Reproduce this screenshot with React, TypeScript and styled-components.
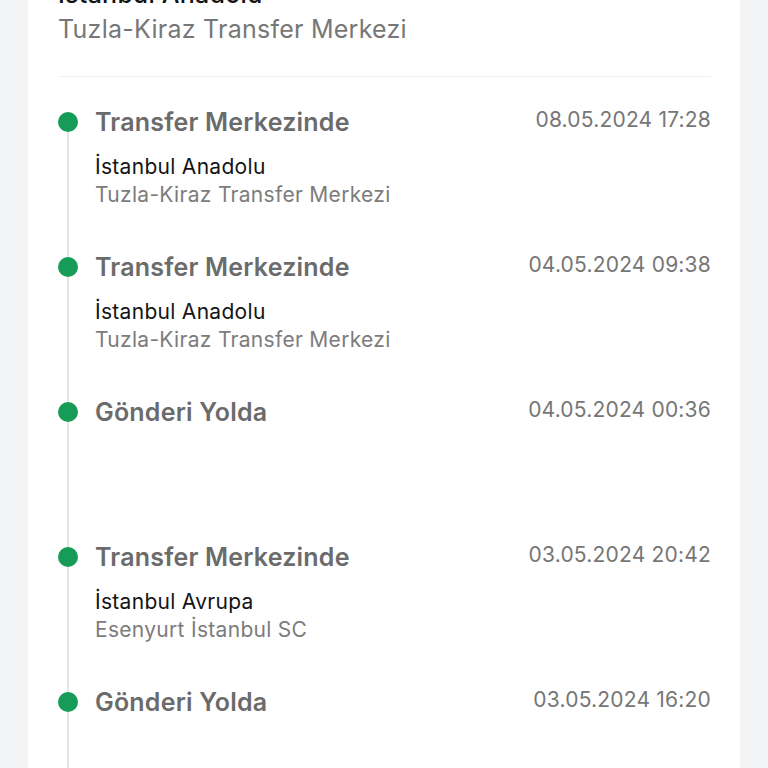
import React from "react";
import styled, { createGlobalStyle } from "styled-components";

const Global = createGlobalStyle`
  html, body { margin: 0; padding: 0; background: #f3f4f6; }
  body { font-family: Inter, "Noto Sans", "Liberation Sans", sans-serif; overflow: hidden; }
`;

const Page = styled.div`
  padding: 0 28px;
  height: 768px;
  overflow: hidden;
`;

const Card = styled.div`
  background: #ffffff;
  margin-top: -21px;
  padding: 0 29px 40px 30px;
  min-height: 900px;
`;

const HeaderTitle = styled.div`
  font-size: 25px;
  line-height: 30px;
  font-weight: 500;
  letter-spacing: 0.25px;
  color: #111;
`;

const HeaderSub = styled.div`
  font-size: 25px;
  line-height: 30px;
  letter-spacing: 0.25px;
  color: #777777;
  margin-top: 5px;
`;

const Divider = styled.div`
  height: 1px;
  background: #f1f1f1;
  margin: 32px 0 30px 1px;
`;

const Timeline = styled.div`
  position: relative;
  display: flex;
  flex-direction: column;
  &::before {
    content: "";
    position: absolute;
    left: 9px;
    top: 15px;
    bottom: 0;
    width: 2px;
    background: #e4e4e4;
  }
`;

const Item = styled.div`
  display: grid;
  grid-template-columns: 20px 1fr;
  column-gap: 17px;
  padding-bottom: 43px;
  position: relative;
`;

const Dot = styled.span`
  width: 20px;
  height: 20px;
  border-radius: 50%;
  background: #179c57;
  margin-top: 5px;
  position: relative;
  z-index: 1;
`;

const Body = styled.div`
  display: flex;
  flex-direction: column;
`;

const Head = styled.div`
  display: flex;
  justify-content: space-between;
  align-items: flex-start;
`;

const Status = styled.div`
  font-size: 25px;
  line-height: 30px;
  font-weight: 600;
  letter-spacing: 0.2px;
  color: #6b6b6b;
`;

const Time = styled.div`
  font-size: 21px;
  line-height: 26px;
  letter-spacing: 0.2px;
  color: #767676;
`;

const Lines = styled.div`
  margin-top: 16px;
  min-height: 56px;
`;

const Place = styled.div`
  font-size: 21px;
  line-height: 28px;
  letter-spacing: 0.3px;
  color: #141414;
`;

const Branch = styled.div`
  font-size: 21px;
  line-height: 28px;
  letter-spacing: 0.3px;
  color: #7c7c7c;
`;

type Ev = { status: string; time: string; place?: string; branch?: string };

const events: Ev[] = [
  { status: "Transfer Merkezinde", time: "08.05.2024 17:28", place: "İstanbul Anadolu", branch: "Tuzla-Kiraz Transfer Merkezi" },
  { status: "Transfer Merkezinde", time: "04.05.2024 09:38", place: "İstanbul Anadolu", branch: "Tuzla-Kiraz Transfer Merkezi" },
  { status: "Gönderi Yolda", time: "04.05.2024 00:36" },
  { status: "Transfer Merkezinde", time: "03.05.2024 20:42", place: "İstanbul Avrupa", branch: "Esenyurt İstanbul SC" },
  { status: "Gönderi Yolda", time: "03.05.2024 16:20" },
];

export default function App() {
  return (
    <>
      <Global />
      <Page>
        <Card>
          <HeaderTitle>İstanbul Anadolu</HeaderTitle>
          <HeaderSub>Tuzla-Kiraz Transfer Merkezi</HeaderSub>
          <Divider />
          <Timeline>
            {events.map((e, i) => (
              <Item key={i}>
                <Dot />
                <Body>
                  <Head>
                    <Status>{e.status}</Status>
                    <Time>{e.time}</Time>
                  </Head>
                  <Lines>
                    {e.place && <Place>{e.place}</Place>}
                    {e.branch && <Branch>{e.branch}</Branch>}
                  </Lines>
                </Body>
              </Item>
            ))}
          </Timeline>
        </Card>
      </Page>
    </>
  );
}
